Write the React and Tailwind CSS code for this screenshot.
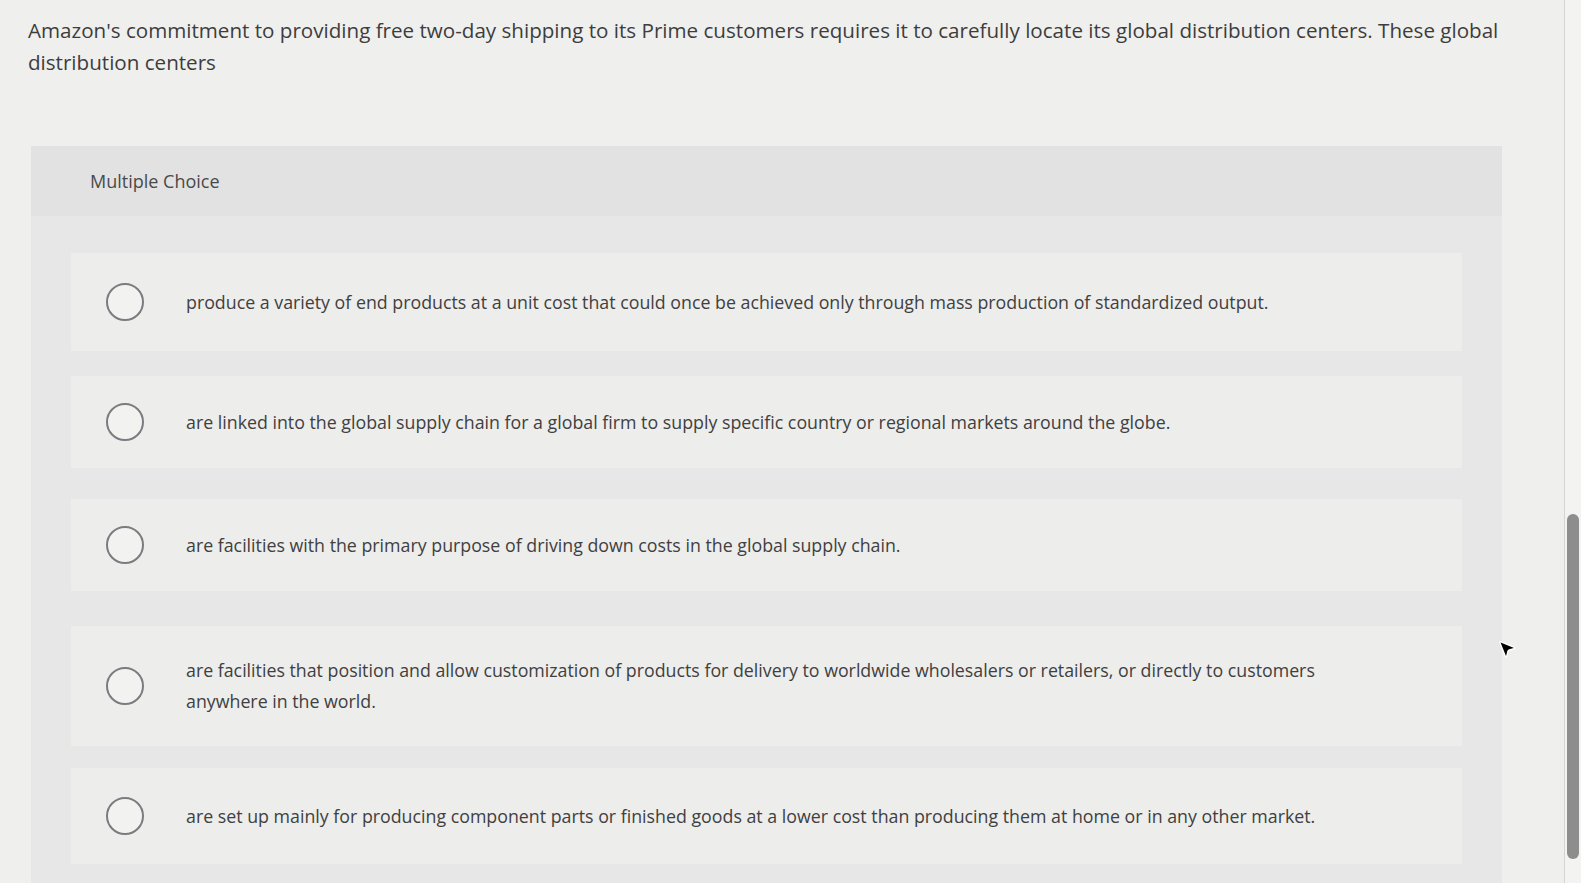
import { MousePointer2 } from 'lucide-react';

const options = [
  { text: 'produce a variety of end products at a unit cost that could once be achieved only through mass production of standardized output.', cls: 'h-[98px]' },
  { text: 'are linked into the global supply chain for a global firm to supply specific country or regional markets around the globe.', cls: 'h-[92px] mt-[25px]' },
  { text: 'are facilities with the primary purpose of driving down costs in the global supply chain.', cls: 'h-[92px] mt-[31px]' },
  { text: 'are facilities that position and allow customization of products for delivery to worldwide wholesalers or retailers, or directly to customers anywhere in the world.', cls: 'h-[120px] mt-[35px]' },
  { text: 'are set up mainly for producing component parts or finished goods at a lower cost than producing them at home or in any other market.', cls: 'h-[96px] mt-[22px]' },
];

export default function App() {
  return (
    <div className="relative flex h-[883px] w-[1581px] overflow-hidden bg-[#efefee] font-['Open_Sans',sans-serif] text-[#3d3d3d]">
      <div className="flex-1 min-w-0">
        {/* Question */}
        <p className="pl-[28px] pr-[40px] pt-[14px] text-[20.6px] leading-[32px]">
          Amazon's commitment to providing free two-day shipping to its Prime customers requires it to carefully locate its global distribution centers. These global distribution centers
        </p>

        {/* Panel */}
        <div className="ml-[31px] mr-[62px] mt-[68px] bg-[#e6e7e6]">
          <div className="h-[70px] flex items-center px-[59px] bg-[#e1e2e1] text-[18px] text-[#4a4a4a]">
            Multiple Choice
          </div>
          <div className="flex flex-col px-[40px] pt-[37px] pb-[24px]">
            {options.map((o, i) => (
              <div key={i} className={`flex items-center gap-[42px] bg-[#ededec] pl-[35px] pr-[120px] ${o.cls}`}>
                <span className="w-[38px] h-[38px] rounded-full border-[2px] border-[#7b7b80] shrink-0 bg-[#f2f2f1]" />
                <span className="text-[17.8px] leading-[31px] text-[#404040]">{o.text}</span>
              </div>
            ))}
          </div>
        </div>
      </div>

      {/* Scrollbar */}
      <div className="w-[17px] shrink-0 border-l border-[#d4d4d2] bg-[#f3f3f2] flex flex-col pt-[514px] pb-[24px] items-center">
        <div className="w-[12px] flex-1 rounded-full bg-[#8c8d8c]" />
      </div>

      {/* Cursor */}
      <MousePointer2 className="absolute left-[1496px] top-[638px] w-[22px] h-[22px] fill-black text-white" strokeWidth={1.5} />
    </div>
  );
}
